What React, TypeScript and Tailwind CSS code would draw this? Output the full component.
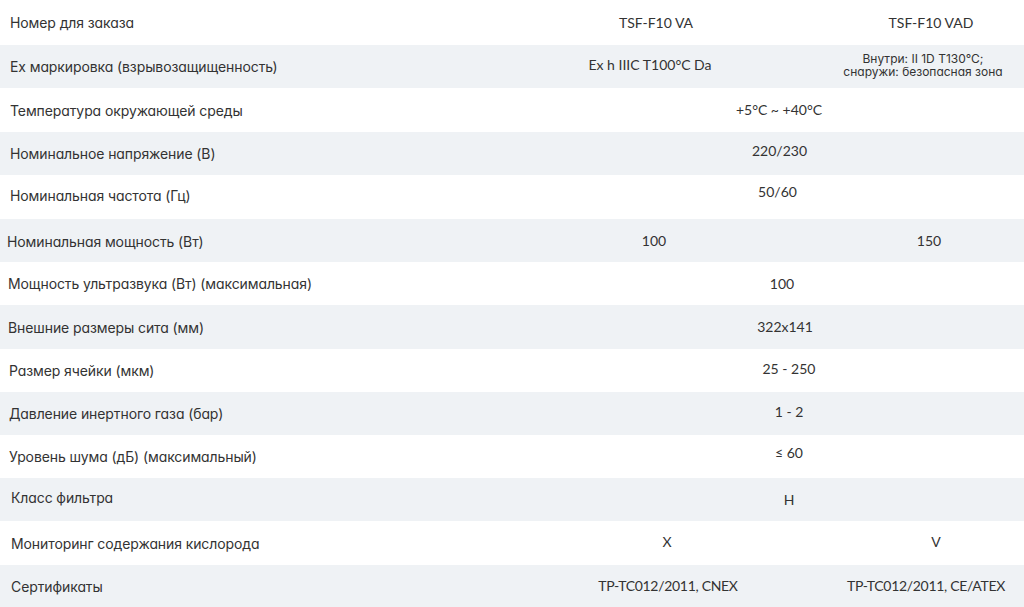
import React from "react";

type Cell = { t: React.ReactNode; cls: string };
type Row = { label: string; lcls: string; h: string; bg: boolean; cells: Cell[] };

const rows: Row[] = [
  { label: "Номер для заказа", lcls: "pl-[10px]", h: "h-[45px]", bg: false, cells: [
    { t: "TSF-F10 VA", cls: "w-[272px] text-[14.5px]" },
    { t: "TSF-F10 VAD", cls: "w-[186px] ml-[46px] text-[14.5px]" },
  ] },
  { label: "Ex маркировка (взрывозащищенность)", lcls: "pl-[10px]", h: "h-[43px]", bg: true, cells: [
    { t: "Ex h IIIC T100°C Da", cls: "w-[260px] pb-[4px]" },
    { t: <span className="text-[12px] leading-[13px] block font-['Inter',sans-serif] [font-feature-settings:'cv11']">Внутри: II 1D T130°C;<br />снаружи: безопасная зона</span>, cls: "w-[186px] ml-[50px] pb-[4px]" },
  ] },
  { label: "Температура окружающей среды", lcls: "pl-[10px]", h: "h-[44px]", bg: false, cells: [
    { t: "+5°C ~ +40°C", cls: "w-[518px]" },
  ] },
  { label: "Номинальное напряжение (В)", lcls: "pl-[10px]", h: "h-[43px]", bg: true, cells: [
    { t: "220/230", cls: "w-[519px] pb-[6px]" },
  ] },
  { label: "Номинальная частота (Гц)", lcls: "pl-[10px] pb-[3px]", h: "h-[44px]", bg: false, cells: [
    { t: "50/60", cls: "w-[515px] pb-[10px]" },
  ] },
  { label: "Номинальная мощность (Вт)", lcls: "pl-[7px] pt-[2px]", h: "h-[43px]", bg: true, cells: [
    { t: "100", cls: "w-[268px]" },
    { t: "150", cls: "w-[186px] ml-[48px]" },
  ] },
  { label: "Мощность ультразвука (Вт) (максимальная)", lcls: "pl-[8px]", h: "h-[43px]", bg: false, cells: [
    { t: "100", cls: "w-[524px]" },
  ] },
  { label: "Внешние размеры сита (мм)", lcls: "pl-[8px]", h: "h-[44px]", bg: true, cells: [
    { t: "322x141", cls: "w-[530px]" },
  ] },
  { label: "Размер ячейки (мкм)", lcls: "pl-[9px]", h: "h-[43px]", bg: false, cells: [
    { t: "25 - 250", cls: "w-[538px] pb-[4px]" },
  ] },
  { label: "Давление инертного газа (бар)", lcls: "pl-[9px]", h: "h-[43px]", bg: true, cells: [
    { t: "1 - 2", cls: "w-[538px] pb-[4px]" },
  ] },
  { label: "Уровень шума (дБ) (максимальный)", lcls: "pl-[9px]", h: "h-[43px]", bg: false, cells: [
    { t: "≤ 60", cls: "w-[538px] pb-[8px]" },
  ] },
  { label: "Класс фильтра", lcls: "pl-[11px] pb-[4px]", h: "h-[43px]", bg: true, cells: [
    { t: "H", cls: "w-[538px]" },
  ] },
  { label: "Мониторинг содержания кислорода", lcls: "pl-[11px]", h: "h-[44px]", bg: false, cells: [
    { t: "X", cls: "w-[294px] pb-[2px]" },
    { t: "V", cls: "w-[176px] ml-[34px] pb-[2px]" },
  ] },
  { label: "Сертификаты", lcls: "pl-[11px]", h: "h-[42px]", bg: true, cells: [
    { t: "TP-TC012/2011, CNEX", cls: "w-[296px] tracking-[-0.3px]" },
    { t: "TP-TC012/2011, CE/ATEX", cls: "w-[196px] ml-[12px] tracking-[-0.3px]" },
  ] },
];

export default function App() {
  return (
    <div className="w-[1024px] h-[607px] overflow-hidden bg-white text-[#333333] font-['Lato',sans-serif]">
      {rows.map((r, i) => (
        <div key={i} className={`${r.h} flex items-center ${r.bg ? "bg-[#eff2f5]" : "bg-white"}`}>
          <div className={`w-[520px] shrink-0 ${r.lcls} text-[14px] font-['Inter',sans-serif] [font-feature-settings:'cv11'] tracking-[-0.1px]`}>
            {r.label}
          </div>
          {r.cells.map((c, j) => (
            <div key={j} className={`${c.cls} shrink-0 text-center text-[14px] leading-[18px]`}>
              {c.t}
            </div>
          ))}
        </div>
      ))}
    </div>
  );
}
